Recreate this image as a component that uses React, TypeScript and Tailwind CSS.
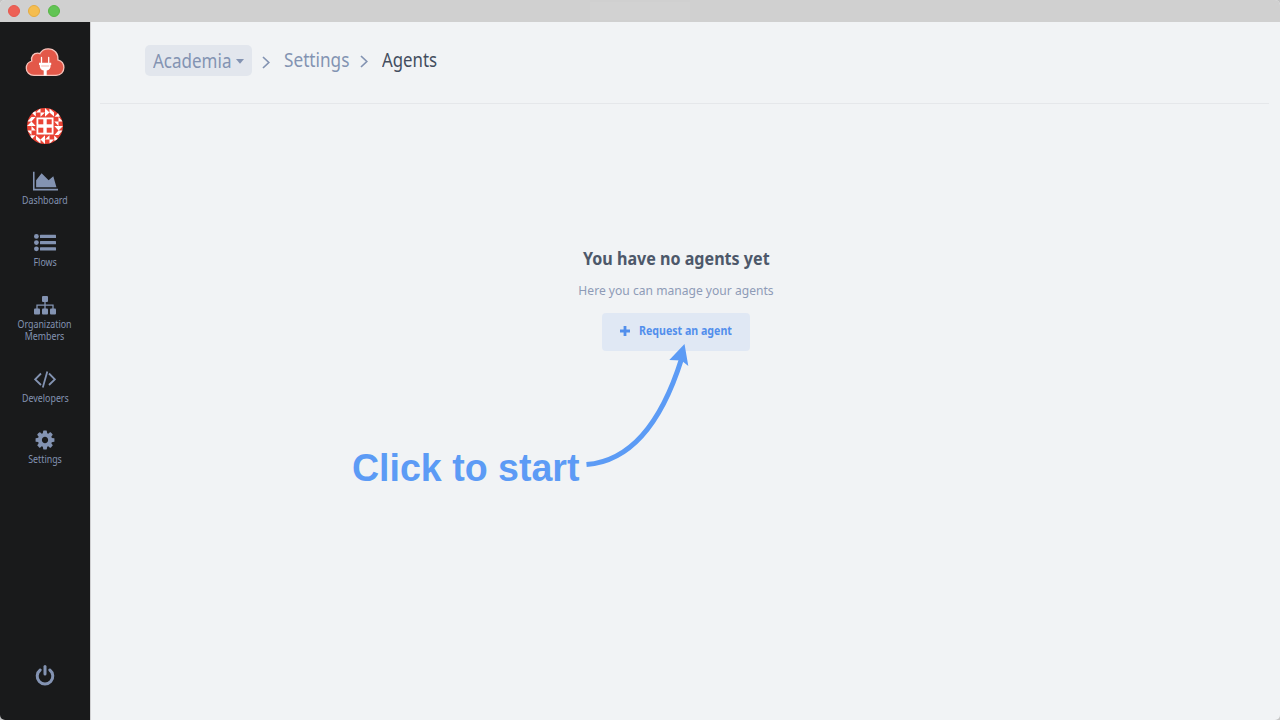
import type { ReactNode } from "react";

function CloudLogo() {
  return (
    <svg width="40" height="29" viewBox="0 0 40 29" fill="none">
      <path
        d="M9 27.4C4.500 27.400 1.300 24.300 1.300 20.200C1.300 16.500 3.600 13.900 6.700 13C5.700 8.200 8.800 5.100 12.600 5.100Q13.800 5.100 14.900 5.600C16.500 2.600 19.700 .8 23.200 .8C29.500 .8 33.500 5.600 32.900 11.800C36.600 12.900 38.900 15.900 38.900 19.600C38.900 24 35.800 27.400 31 27.400Z"
        fill="#e35849" stroke="#f6c3bb" strokeWidth="1.300"
      />
      <path d="M16.500 9.500v5M23.700 9.500v5" stroke="#fff" strokeWidth="1.300" strokeLinecap="round" />
      <path d="M14 14.700h12.200v2.300h-.6c.2 3.300-1.200 5-3.900 5.600v4.800h-3v-4.800c-2.700-.7-4.100-2.300-4-5.600h-.7z" fill="#fff" />
      <path d="M16.200 18h8" stroke="#f4b4ab" strokeWidth="1.200" />
    </svg>
  );
}

function Avatar() {
  return (
    <svg className="rounded-full" width="36" height="36" viewBox="0 0 36 36">
      <rect width="36" height="36" fill="#ea4335" />
      <rect x="9.500" y="9.500" width="17" height="17" fill="#fff" />
      {[0, 90, 180, 270].map((a) => (
        <g key={a} transform={`rotate(${a} 18 18)`}>
          <path
            d="M9 4.500 13.500 .3V4.500H18L13.500 8.700V4.500zM18 0 22.500 4.500H18zM18 4.500H22.500L18 8.700zM22.500 .5 27 4.500H22.500zM22.500 4.500H27V8.500zM3.500 3.500H8.800V8.500z"
            fill="#fff"
          />
          <rect x="11.300" y="11.300" width="5" height="5" fill="#ea4335" />
        </g>
      ))}
    </svg>
  );
}

function AreaIcon() {
  return (
    <svg width="25" height="22" viewBox="0 0 2048 1792" fill="currentColor">
      <path d="M2048 1536v128h-2048v-1536h128v1408h1920zM1664 512l256 896h-1664v-576l448-576 576 576z" />
    </svg>
  );
}

function ListIcon() {
  return (
    <svg width="22" height="18" viewBox="0 0 22 18" fill="currentColor">
      {[2.4, 8.6, 14.8].map((y) => (
        <g key={y}>
          <circle cx="2.400" cy={y} r="2.400" />
          <rect x="6" y={y - 1.6} width="16" height="3.200" rx=".5" />
        </g>
      ))}
    </svg>
  );
}

function SitemapIcon() {
  return (
    <svg width="22" height="19" viewBox="0 0 22 19" fill="currentColor">
      <rect x="8" y="0" width="6" height="6" rx="1" />
      <rect x="0" y="12.500" width="6" height="6" rx="1" />
      <rect x="8" y="12.500" width="6" height="6" rx="1" />
      <rect x="16" y="12.500" width="6" height="6" rx="1" />
      <path d="M11 5v8M3 13v-3.800h16V13" fill="none" stroke="currentColor" strokeWidth="1.300" />
    </svg>
  );
}

function CodeIcon() {
  return (
    <svg width="22" height="17" viewBox="0 0 22 17" fill="none" stroke="currentColor" strokeWidth="1.800">
      <path d="M7 2.500 1.200 8.300 7 14M15 2.500l5.800 5.800L15 14M13.300.5 8.800 16.500" />
    </svg>
  );
}

function CogIcon() {
  return (
    <svg width="22" height="22" viewBox="0 0 1792 1792" fill="currentColor">
      <path d="M1152 896q0-106-75-181t-181-75-181 75-75 181 75 181 181 75 181-75 75-181zm512-109v222q0 12-8 23t-20 13l-185 28q-19 54-39 91 35 50 107 138 10 12 10 25t-9 23q-27 37-99 108t-94 71q-12 0-26-9l-138-108q-44 23-91 38-16 136-29 186-7 28-36 28h-222q-14 0-24.500-8.500t-11.500-21.500l-28-184q-49-16-90-37l-141 107q-10 9-25 9-14 0-25-11-126-114-165-168-7-10-7-23 0-12 8-23 15-21 51-66.500t54-70.500q-27-50-41-99l-183-27q-13-2-21-12.500t-8-23.500v-222q0-12 8-23t19-13l186-28q14-46 39-92-40-57-107-138-10-12-10-24 0-10 9-23 26-36 98.500-107.500t94.500-71.500q13 0 26 10l138 107q44-23 91-38 16-136 29-186 7-28 36-28h222q14 0 24.500 8.500t11.500 21.500l28 184q49 16 90 37l142-107q9-9 24-9 13 0 25 10 129 119 165 170 7 8 7 22 0 12-8 23-15 21-51 66.500t-54 70.500q26 50 41 98l183 28q13 2 21 12.500t8 23.500z" />
    </svg>
  );
}

function PowerIcon() {
  return (
    <svg width="20" height="22" viewBox="0 0 20 22" fill="none" stroke="currentColor" strokeWidth="3" strokeLinecap="round">
      <path d="M10 2.400v7.600" />
      <path d="M5.200 6a7.800 7.800 0 1 0 9.600 0" />
    </svg>
  );
}

function Chevron() {
  return (
    <svg width="8" height="13" viewBox="0 0 8 13" fill="none" stroke="#8393b2" strokeWidth="1.700">
      <path d="M1 1l5.800 5.500L1 12" />
    </svg>
  );
}

function NavItem({ icon, height, children }: { icon: ReactNode; height: string; children: ReactNode }) {
  return (
    <a className={`flex w-full flex-col items-center ${height}`}>
      <span className="flex h-[22px] items-center justify-center">{icon}</span>
      <span className="mt-[2px] scale-x-[.885] text-center text-[10px] leading-3 whitespace-nowrap">{children}</span>
    </a>
  );
}

export default function App() {
  return (
    <div className="h-[720px] w-[1280px] bg-[#c4c4c4] font-['Noto_Sans',sans-serif]">
      <div className="relative flex h-full flex-col overflow-hidden rounded-[5px] bg-[#f1f3f5]">
        <header className="flex h-[22px] shrink-0 items-center bg-[#d0d0d0] pl-2">
          <div className="flex gap-2">
            <i className="size-3 rounded-full border border-[#e5584e] bg-[#ed6156]" />
            <i className="size-3 rounded-full border border-[#e5ab40] bg-[#f5bd4f]" />
            <i className="size-3 rounded-full border border-[#57b545] bg-[#61c454]" />
          </div>
          <div className="ml-[530px] h-[18px] w-[100px] bg-[#d2d2d2]" />
        </header>
        <div className="flex min-h-0 flex-1">
          <aside className="flex w-[90px] shrink-0 flex-col items-center bg-[#191a1b] pt-[26px] text-[#8393b2]">
            <CloudLogo />
            <div className="mt-[31px]"><Avatar /></div>
            <nav className="mt-[26px] flex w-full flex-col">
              <NavItem icon={<AreaIcon />} height="h-[62px]">Dashboard</NavItem>
              <NavItem icon={<ListIcon />} height="h-[62px]">Flows</NavItem>
              <NavItem icon={<SitemapIcon />} height="h-[74px]">Organization<br />Members</NavItem>
              <NavItem icon={<CodeIcon />} height="h-[61px]">Developers</NavItem>
              <NavItem icon={<CogIcon />} height="h-[40px]">Settings</NavItem>
            </nav>
            <div className="mt-auto mb-[34px]"><PowerIcon /></div>
          </aside>
          <main className="flex flex-1 flex-col border-l border-[#d0d0d2] pr-[11px] pl-[9px]">
            <div className="flex h-[82px] shrink-0 items-start border-b border-[#e5e7ea] pt-[23px] pl-[45px] text-[19px] leading-[30px] text-[#8393b2]">
              <button className="flex h-[31px] w-[107px] items-center rounded-[5px] bg-[#e2e6ed] pl-2">
                <span className="w-[78px] text-left"><span className="inline-block origin-left scale-x-[.895]">Academia</span></span>
                <svg className="mt-px ml-[5px]" width="8" height="5" viewBox="0 0 8 5"><path d="M0 0h8L4 4.800z" fill="#8393b2" /></svg>
              </button>
              <span className="mt-[11px] ml-[10px]"><Chevron /></span>
              <span className="ml-[14px] w-[66px]"><span className="inline-block origin-left scale-x-[.905]">Settings</span></span>
              <span className="mt-[10px] ml-[10px]"><Chevron /></span>
              <span className="ml-[14px] text-[#434d5e]"><span className="inline-block origin-left scale-x-[.885]">Agents</span></span>
            </div>
            <section className="flex flex-col items-center pt-[140px] pr-[17px]">
              <h1 className="scale-x-[.87] text-[18.500px] leading-7 font-bold whitespace-nowrap text-[#4d586a]">You have no agents yet</h1>
              <p className="mt-[8px] scale-x-[.93] text-[13px] leading-5 whitespace-nowrap text-[#8e9bb7]">Here you can manage your agents</p>
              <button className="mt-[13px] flex h-[38px] w-[148px] items-center rounded-[4px] bg-[#e0e8f4] pb-[3px] pl-[18px] text-[#528fec]">
                <svg width="10" height="10" viewBox="0 0 10 10"><path d="M5 0v10M0 5h10" stroke="currentColor" strokeWidth="2.800" /></svg>
                <span className="ml-[9px] origin-left scale-x-[.885] text-xs font-bold whitespace-nowrap">Request an agent</span>
              </button>
            </section>
          </main>
        </div>
        <div className="absolute top-[343px] left-[351px] flex text-[#5c9bf5]">
          <span className="mt-[101px] w-[234px] text-[38px] leading-[48px] font-bold whitespace-nowrap font-['Liberation_Sans',sans-serif]"><span className="inline-block origin-left scale-x-[.988] pl-px">Click to start</span></span>
          <svg width="104" height="126" viewBox="585 343 104 126" fill="none">
            <path d="M586.500 464.600C632 461 662 421 681.500 359" stroke="currentColor" strokeWidth="5" />
            <path d="M684.500 344 688.300 366 681.500 360.500 669.300 360z" fill="currentColor" />
          </svg>
        </div>
      </div>
    </div>
  );
}
